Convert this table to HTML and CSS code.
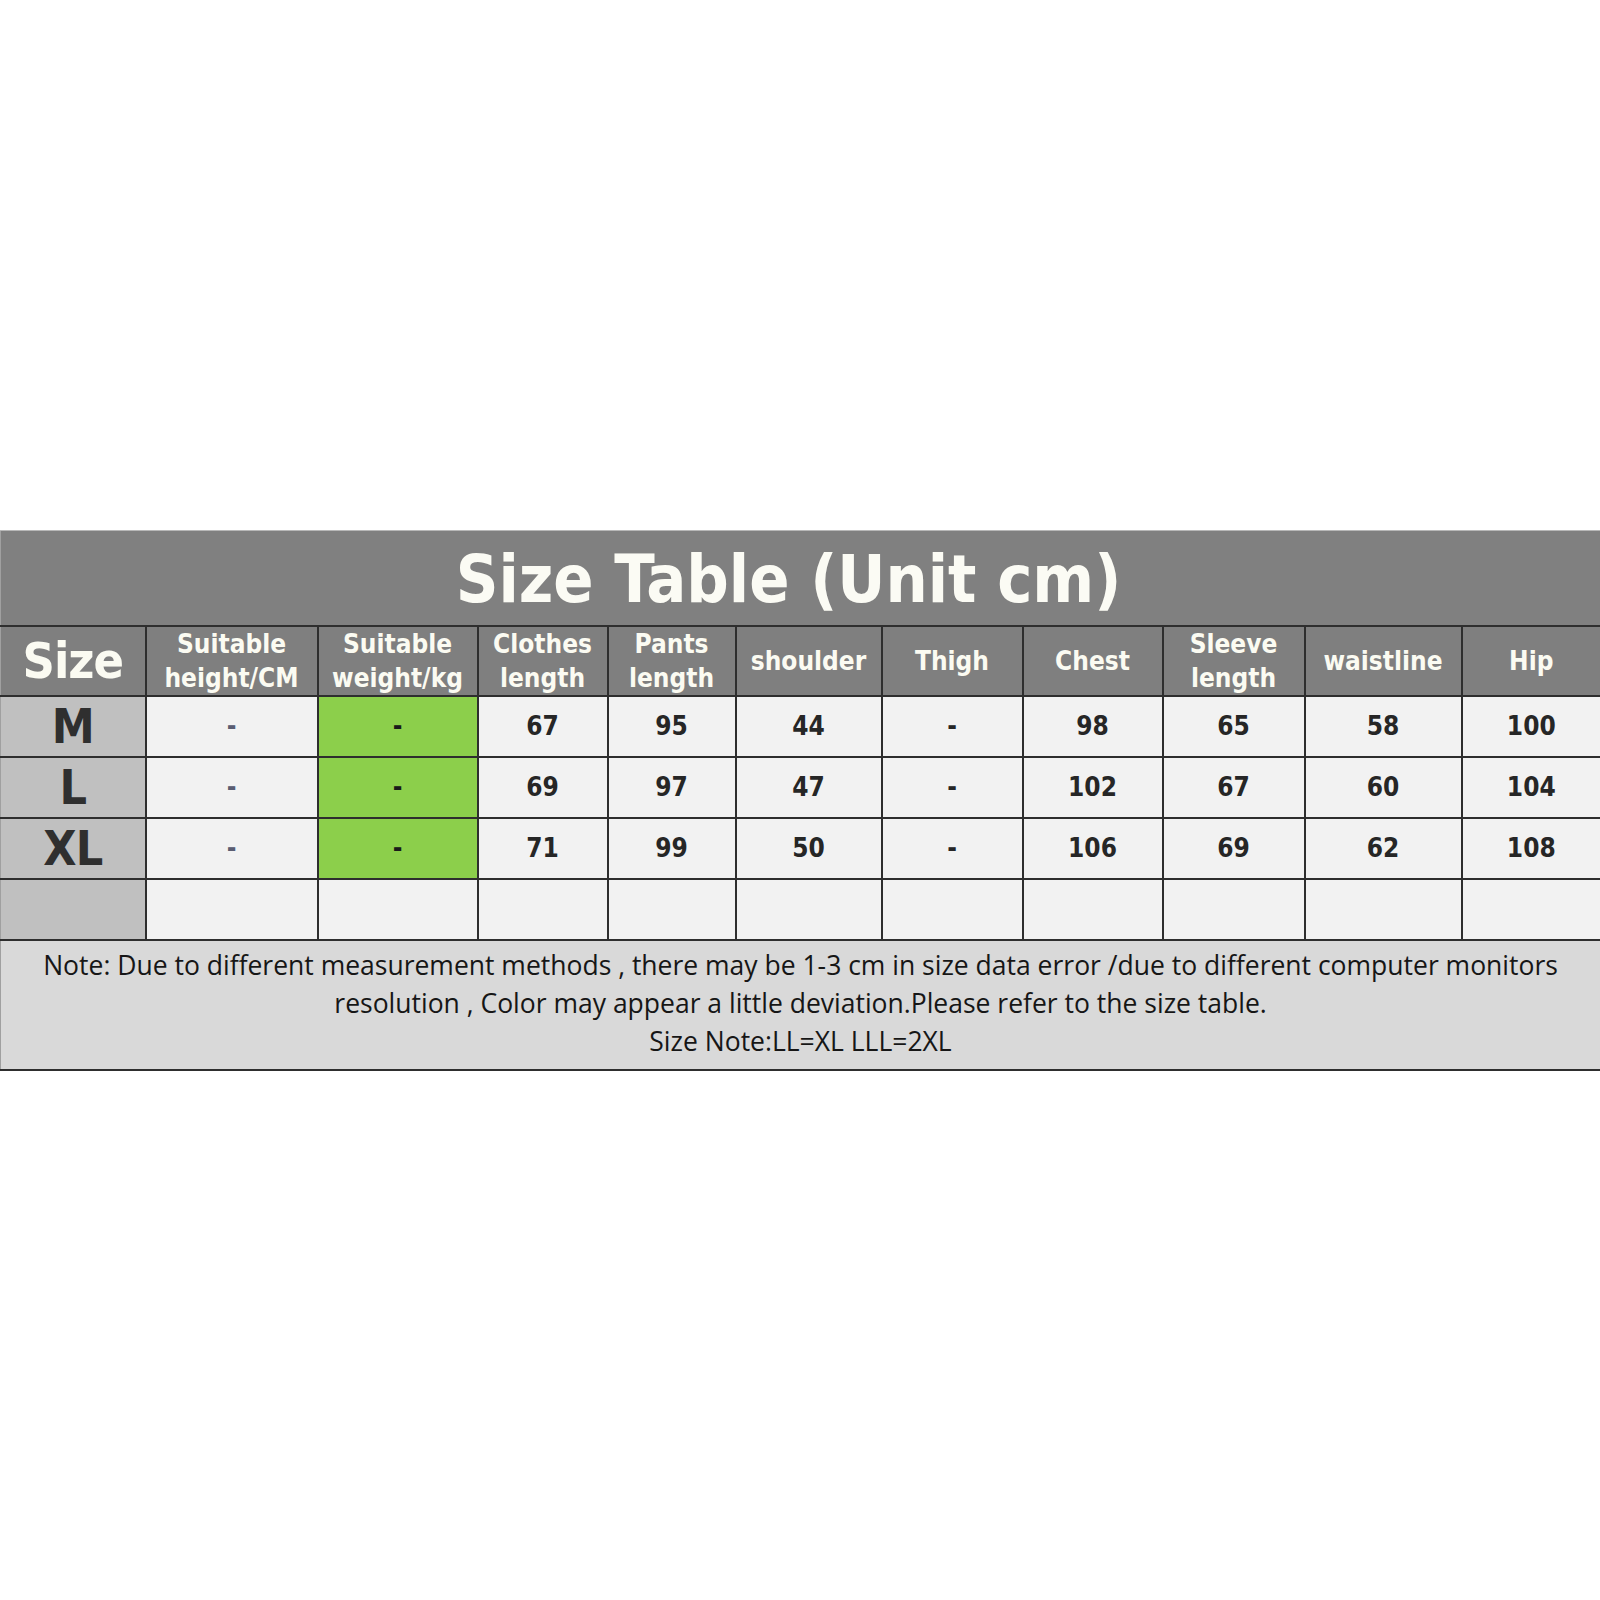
FILE: index.html
```html
<!DOCTYPE html>
<html lang="en">
<head>
<meta charset="utf-8">
<title>Size Table</title>
<link rel="stylesheet" href="styles.css">
</head>
<body>
<div class="page">
  <table class="size-table">
    <colgroup>
      <col class="c-size"><col class="c-h"><col class="c-w"><col class="c-cl"><col class="c-pl"><col class="c-sh"><col class="c-th"><col class="c-ch"><col class="c-sl"><col class="c-wa"><col class="c-hip">
    </colgroup>
    <tr class="title-row"><th colspan="11" class="title">Size Table (Unit cm)</th></tr>
    <tr class="head-row">
      <th class="size-head">Size</th>
      <th>Suitable<br>height/CM</th>
      <th>Suitable<br>weight/kg</th>
      <th>Clothes<br>length</th>
      <th>Pants<br>length</th>
      <th>shoulder</th>
      <th>Thigh</th>
      <th>Chest</th>
      <th>Sleeve<br>length</th>
      <th>waistline</th>
      <th>Hip</th>
    </tr>
    <tr class="body-row">
      <td class="label">M</td><td class="dash soft">-</td><td class="dash green">-</td><td>67</td><td>95</td><td>44</td><td class="dash">-</td><td>98</td><td>65</td><td>58</td><td>100</td>
    </tr>
    <tr class="body-row">
      <td class="label">L</td><td class="dash soft">-</td><td class="dash green">-</td><td>69</td><td>97</td><td>47</td><td class="dash">-</td><td>102</td><td>67</td><td>60</td><td>104</td>
    </tr>
    <tr class="body-row">
      <td class="label">XL</td><td class="dash soft">-</td><td class="dash green">-</td><td>71</td><td>99</td><td>50</td><td class="dash">-</td><td>106</td><td>69</td><td>62</td><td>108</td>
    </tr>
    <tr class="body-row">
      <td class="label"></td><td></td><td></td><td></td><td></td><td></td><td></td><td></td><td></td><td></td><td></td>
    </tr>
    <tr class="note-row">
      <td colspan="11" class="note">Note: Due to different measurement methods , there may be 1-3 cm in size data error /due to different computer monitors<br>resolution , Color may appear a little deviation.Please refer to the size table.<br>Size Note:LL=XL LLL=2XL</td>
    </tr>
  </table>
</div>
</body>
</html>
```

FILE: styles.css
```css
html, body {
  margin: 0;
  padding: 0;
  background: #ffffff;
}

.page {
  padding-top: 530px;
  width: 1600px;
}

.size-table {
  width: 1600px;
  border-collapse: collapse;
  table-layout: fixed;
  font-family: "DejaVu Sans", Verdana, sans-serif;
  font-stretch: condensed;
}

.c-size { width: 145px; }
.c-h { width: 172px; }
.c-w { width: 160px; }
.c-cl { width: 130px; }
.c-pl { width: 128px; }
.c-sh { width: 146px; }
.c-th { width: 141px; }
.c-ch { width: 140px; }
.c-sl { width: 142px; }
.c-wa { width: 157px; }
.c-hip { width: 139px; }

.size-table th,
.size-table td {
  border: 2px solid #2e2e2e;
  padding: 0;
  text-align: center;
  vertical-align: middle;
}

.title-row { height: 95px; }

.title {
  background: #808080;
  color: #fbfbf4;
  font-size: 66px;
  font-weight: bold;
  letter-spacing: 0;
  border-top: 1px solid #b8b8b8 !important;
  border-left: 1px solid #a0a0a0 !important;
  border-right: 1px solid #a0a0a0 !important;
  padding: 4px 24px 0 0 !important;
}

.head-row { height: 70px; }

.head-row th {
  background: #7f7f7f;
  color: #fbfbf2;
  font-size: 26px;
  font-weight: bold;
  line-height: 34px;
}

.head-row th.size-head {
  font-size: 50px;
  letter-spacing: -1px;
}

.body-row { height: 61px; }

.body-row td {
  background: #f2f2f2;
  color: #262626;
  font-size: 26px;
  font-weight: bold;
}

.body-row td.label {
  background: #c0c0c0;
  color: #2f2f2f;
  font-size: 48px;
  letter-spacing: -1px;
}

.body-row td.green {
  background: #8ccf4b;
  color: #1a1a1a;
}

.body-row td.soft {
  color: #5a5d72;
}

.size-table th:first-child,
.size-table td:first-child {
  border-left: 1px solid #a0a0a0;
}

.size-table th:last-child,
.size-table td:last-child {
  border-right: 1px solid #a0a0a0;
}

.note-row { height: 130px; }

.note {
  background: #d9d9d9;
  color: #161616;
  font-family: "Open Sans", "Noto Sans", sans-serif;
  font-stretch: normal;
  font-weight: 500;
  font-size: 26.5px;
  line-height: 38px;
  letter-spacing: 0;
  padding: 4px 0 8px 0 !important;
}
```
